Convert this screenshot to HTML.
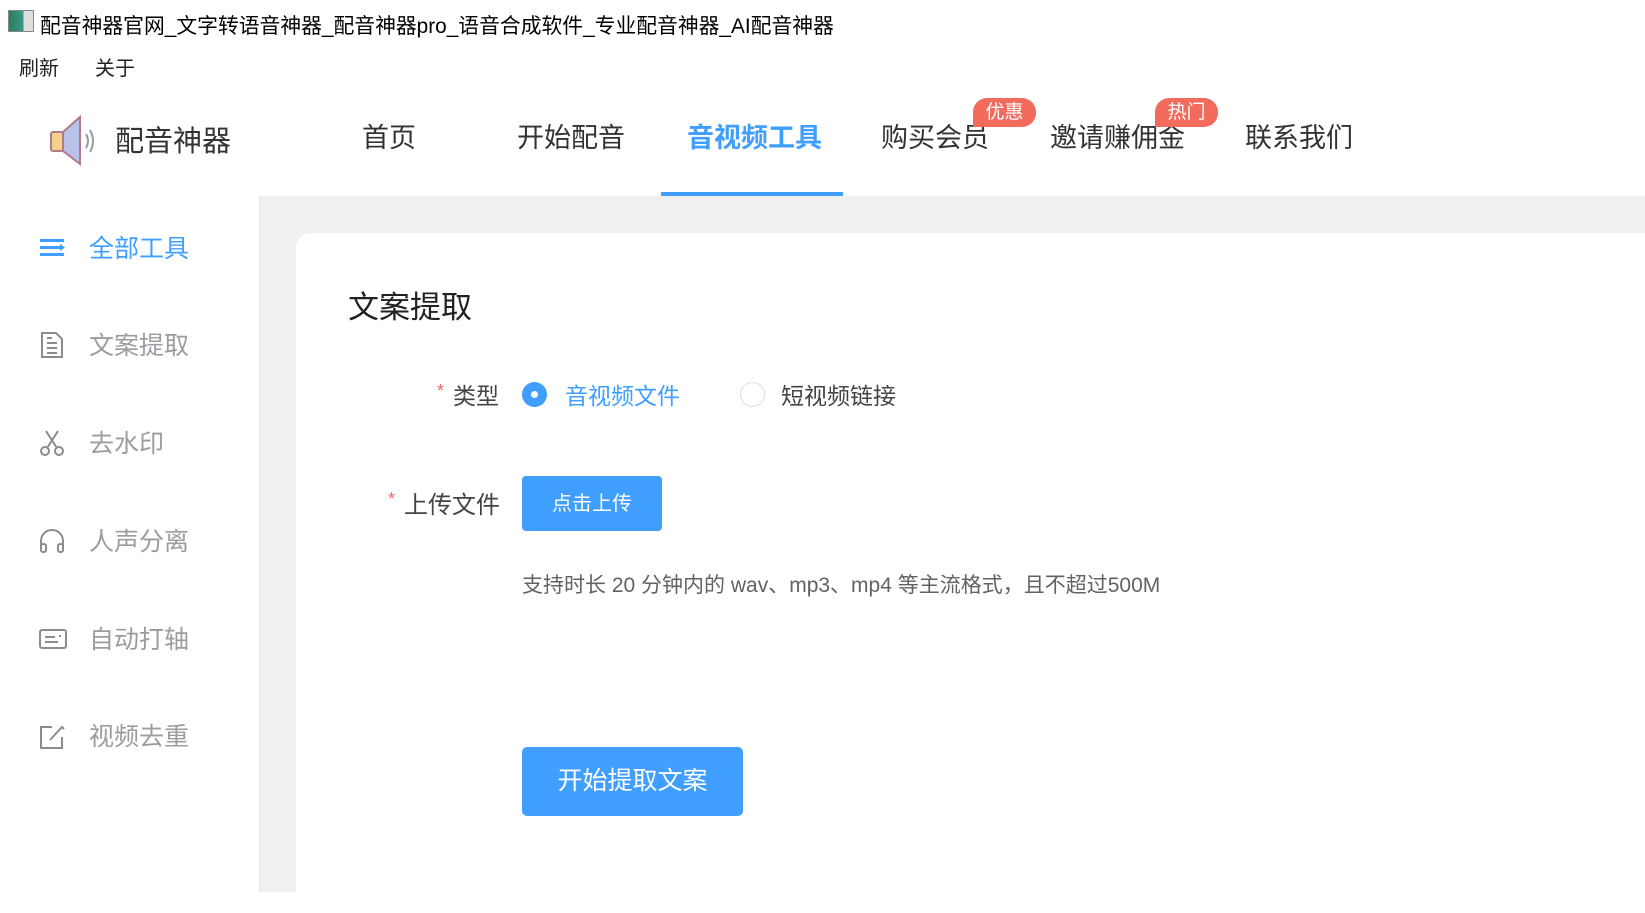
<!DOCTYPE html>
<html><head><meta charset="utf-8"><style>
*{margin:0;padding:0;box-sizing:border-box}
body{width:1645px;height:892px;overflow:hidden;background:#fff;font-family:"Liberation Sans","Noto Sans CJK SC",sans-serif;position:relative;color:#333}
.a{position:absolute;white-space:nowrap}
.nav{font-size:27px;color:#333;top:116px}
.badge{position:absolute;top:98px;height:29px;width:63px;background:#f36b5c;color:#fff;font-size:19px;line-height:29px;text-align:center;border-radius:14px 14px 14px 0}
.si{font-size:25px;color:#9a9ca2;left:89px}
.ic{position:absolute;left:38px}
</style></head><body>
<div class="a" style="left:8px;top:10px;width:26px;height:22px;border:1px solid #888;background:linear-gradient(90deg,#2a7d5a 0,#3a9a8a 60%,#ddd 60%)"></div>
<div class="a" style="left:40px;top:9px;font-size:20.8px;color:#000">配音神器官网_文字转语音神器_配音神器pro_语音合成软件_专业配音神器_AI配音神器</div>
<div class="a" style="left:19px;top:52px;font-size:20px;color:#222">刷新</div>
<div class="a" style="left:95px;top:52px;font-size:20px;color:#222">关于</div>
<svg class="a" style="left:48px;top:113px" width="50" height="55" viewBox="0 0 50 55">
<rect x="3" y="19" width="12" height="19" rx="2" fill="#f5d28a" stroke="#b07a8a" stroke-width="2"/>
<path d="M15 19 L32 4 L32 51 L15 38 Z" fill="#b9c3ea" stroke="#b07a8a" stroke-width="2"/>
<path d="M38 21 Q42 28 38 35" fill="none" stroke="#999" stroke-width="2"/>
<path d="M42 17 Q48 28 42 39" fill="none" stroke="#999" stroke-width="2"/>
</svg>
<div class="a" style="left:115px;top:118px;font-size:29px;color:#333">配音神器</div>
<div class="a nav" style="left:362px">首页</div>
<div class="a nav" style="left:517px">开始配音</div>
<div class="a nav" style="left:687px;color:#409eff;font-weight:bold">音视频工具</div>
<div class="a nav" style="left:881px">购买会员</div>
<div class="a nav" style="left:1050px">邀请赚佣金</div>
<div class="a nav" style="left:1245px">联系我们</div>
<div class="badge" style="left:973px">优惠</div>
<div class="badge" style="left:1155px">热门</div>
<div class="a" style="left:661px;top:192px;width:182px;height:4px;background:#409eff"></div>
<div class="a" style="left:259px;top:196px;width:1386px;height:696px;background:#f0f0f0;border-left:1px solid #e4e4e4"></div>
<div class="a" style="left:296px;top:233px;width:1360px;height:680px;background:#fff;border-radius:14px"></div>
<svg class="ic" style="top:236px" width="28" height="24"><g fill="#409eff"><rect x="2" y="3" width="24" height="3"/><rect x="2" y="10" width="20" height="3"/><rect x="2" y="17" width="24" height="3"/><path d="M22 8 L27 11.5 L22 15Z"/></g></svg>
<div class="a si" style="top:229px;color:#409eff">全部工具</div>
<svg class="ic" style="top:331px" width="28" height="28" fill="none" stroke="#8a8c92" stroke-width="2"><path d="M4 2 H18 L24 8 V26 H4 Z M9 12 H19 M9 17 H19 M9 22 H19 M9 7 H14"/></svg>
<div class="a si" style="top:326px">文案提取</div>
<svg class="ic" style="top:429px" width="28" height="28" fill="none" stroke="#8a8c92" stroke-width="2"><circle cx="7" cy="22" r="4"/><circle cx="21" cy="22" r="4"/><path d="M9 19 L20 2 M19 19 L8 2"/></svg>
<div class="a si" style="top:424px">去水印</div>
<svg class="ic" style="top:527px" width="28" height="28" fill="none" stroke="#8a8c92" stroke-width="2"><path d="M3 24 V14 A11 11 0 0 1 25 14 V24"/><rect x="3" y="17" width="5" height="8" rx="2"/><rect x="20" y="17" width="5" height="8" rx="2"/></svg>
<div class="a si" style="top:522px">人声分离</div>
<svg class="ic" style="top:625px" width="30" height="28" fill="none" stroke="#8a8c92" stroke-width="2"><rect x="2" y="5" width="26" height="18" rx="2"/><path d="M7 12 H17 M7 17 H20 M21 11 H23"/></svg>
<div class="a si" style="top:620px">自动打轴</div>
<svg class="ic" style="top:723px" width="28" height="28" fill="none" stroke="#8a8c92" stroke-width="2"><path d="M14 4 H3 V25 H24 V14 M12 17 L24 4 L26 6"/></svg>
<div class="a si" style="top:717px">视频去重</div>
<div class="a" style="left:348px;top:282px;font-size:31px;color:#222">文案提取</div>
<div class="a" style="left:437px;top:381px;font-size:18px;color:#f56c6c">*</div>
<div class="a" style="left:453px;top:377px;font-size:23px;color:#444">类型</div>
<div class="a" style="left:522px;top:382px;width:25px;height:25px;border-radius:50%;background:#409eff"><div style="position:absolute;left:9px;top:9px;width:7px;height:7px;border-radius:50%;background:#fff"></div></div>
<div class="a" style="left:565px;top:377px;font-size:23px;color:#409eff">音视频文件</div>
<div class="a" style="left:740px;top:382px;width:25px;height:25px;border-radius:50%;border:1px solid #dcdfe6"></div>
<div class="a" style="left:781px;top:377px;font-size:23px;color:#444">短视频链接</div>
<div class="a" style="left:388px;top:489px;font-size:18px;color:#f56c6c">*</div>
<div class="a" style="left:404px;top:485px;font-size:24px;color:#444">上传文件</div>
<div class="a" style="left:522px;top:476px;width:140px;height:55px;background:#409eff;border-radius:4px;color:#fff;font-size:20px;line-height:57px;text-align:center">点击上传</div>
<div class="a" style="left:522px;top:569px;font-size:21px;color:#606266">支持时长 20 分钟内的 wav、mp3、mp4 等主流格式，且不超过500M</div>
<div class="a" style="left:522px;top:747px;width:221px;height:69px;background:#409eff;border-radius:5px;color:#fff;font-size:25px;line-height:69px;text-align:center">开始提取文案</div>
</body></html>
